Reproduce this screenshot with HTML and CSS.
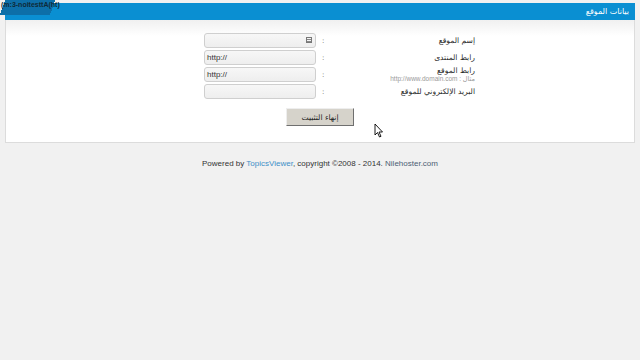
FILE: index.html
```html
<!DOCTYPE html>
<html lang="ar">
<head>
<meta charset="utf-8">
<link rel="stylesheet" href="styles.css">
</head>
<body>
<div class="panel">
  <div class="head">
    <span class="wm">(m:3-noitesttA(ht)</span>
    <span class="title" dir="rtl">بيانات الموقع</span>
  </div>
  <div class="body">
    <div class="form">
      <div class="field"><span class="input"><span class="key"></span></span></div>
      <span class="colon">:</span>
      <div class="label" dir="rtl">إسم الموقع</div>

      <div class="field"><span class="input">http://</span></div>
      <span class="colon">:</span>
      <div class="label" dir="rtl">رابط المنتدى</div>

      <div class="field"><span class="input">http://</span></div>
      <span class="colon">:</span>
      <div class="label" dir="rtl">رابط الموقع<span class="sub">مثال : http://www.domain.com</span></div>

      <div class="field"><span class="input"></span></div>
      <span class="colon">:</span>
      <div class="label" dir="rtl">البريد الإلكتروني للموقع</div>
    </div>
    <div class="actions"><button class="btn" dir="rtl">إنهاء التثبيت</button></div>
    <svg class="cursor" width="10" height="15" viewBox="0 0 10 15"><path d="M1 1 L1 12 L3.5 9.5 L5.5 14 L7 13.3 L5 9 L8.5 9 Z" fill="#fff" stroke="#000" stroke-width="0.9" stroke-linejoin="round"/></svg>
  </div>
</div>
<div class="footer">Powered by <span class="tv">TopicsViewer</span>, copyright ©2008 - 2014. <span class="nh">Nilehoster.com</span></div>
</body>
</html>
```
FILE: styles.css
```css
html, body { margin: 0; padding: 0; }
body {
  background: #f1f1f1;
  font-family: "DejaVu Sans", "Liberation Sans", sans-serif;
  width: 640px;
  height: 360px;
  overflow: hidden;
  padding-top: 3px;
  box-sizing: border-box;
}
.panel {
  margin: 0 5px;
  border: 1px solid #dcdcdc;
  background: #fff;
  position: relative;
}
.head {
  height: 17px;
  background: #0a8fd2;
  display: flex;
  align-items: center;
  justify-content: space-between;
  position: relative;
  margin: -1px -1px 0 -1px;
}
.wm {
  position: absolute;
  left: -5px;
  top: -3px;
  height: 15px;
  width: 60px;
  font-size: 7px;
  line-height: 9px;
  font-weight: bold;
  color: #0e2a38;
  background: linear-gradient(110deg, transparent 0 5px, #0d6fa8 5px, #0d6fa8 52px, transparent 52px);
  padding: 0 0 0 1px;
  box-sizing: border-box;
  overflow: hidden;
  white-space: nowrap;
  font-family: "Liberation Sans", sans-serif;
}
.title {
  margin-left: auto;
  margin-right: 6px;
  color: #fff;
  font-size: 8px;
}
.body {
  height: 122px;
  background: linear-gradient(#f0f0f0 0, #fff 16px, #fff 100%);
  position: relative;
  padding-top: 12px;
  box-sizing: border-box;
}
.form {
  display: grid;
  grid-template-columns: 112px 44px 115px;
  grid-auto-rows: 17px;
  margin-left: 198px;
  align-items: center;
}
.field { display: flex; align-items: center; }
.input {
  width: 112px;
  height: 15px;
  box-sizing: border-box;
  border: 1px solid #cfcfcf;
  border-radius: 3px;
  background: linear-gradient(#f7f7f7, #eeeeee);
  font-family: "Liberation Sans", sans-serif;
  font-size: 8px;
  color: #333;
  line-height: 13px;
  padding-left: 2px;
  position: relative;
}
.key {
  position: absolute;
  right: 3px;
  top: 3px;
  width: 6px;
  height: 6px;
  border: 1px solid #777;
  background: repeating-linear-gradient(#f4f4f4 0 1px, #888 1px 2px);
  box-sizing: border-box;
}
.colon {
  font-size: 7px;
  color: #555;
  padding-left: 6px;
}
.label {
  text-align: right;
  font-size: 7.6px;
  color: #2a2a2a;
  line-height: 8px;
  display: flex;
  flex-direction: column;
}
.sub {
  font-size: 6.5px;
  color: #9a9a9a;
  line-height: 7px;
  font-family: "Liberation Sans", "DejaVu Sans", sans-serif;
}
.actions {
  display: flex;
  margin-left: 280px;
  margin-top: 8px;
}
.btn {
  width: 68px;
  height: 18px;
  background: #d6d3cb;
  border: 1px solid;
  border-color: #eeeeee #6f6f6f #6f6f6f #eeeeee;
  font-family: "DejaVu Sans", sans-serif;
  font-size: 7.6px;
  color: #222;
  padding: 0;
}
.cursor {
  position: absolute;
  left: 368px;
  top: 103px;
}
.footer {
  text-align: center;
  font-family: "Liberation Sans", sans-serif;
  font-size: 8px;
  color: #333;
  margin-top: 16px;
}
.tv { color: #3d8fc7; }
.nh { color: #4c5e73; }
```
